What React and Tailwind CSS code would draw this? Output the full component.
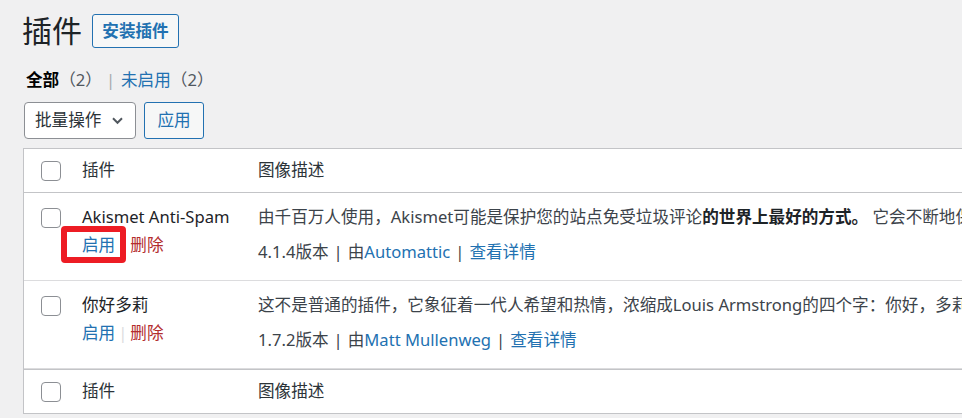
const font = { fontFamily: '"Segoe UI", "Noto Sans", "Noto Sans CJK SC", sans-serif' }

function Checkbox() {
  return <span className="block h-5 w-5 rounded-[4px] border border-[#8c8f94] bg-white" />
}

function HeadRow({ bottom }) {
  return (
    <div className={`flex h-[44px] items-center ${bottom ? 'border-t' : 'border-b'} border-[#c3c4c7] text-[#2c3338]`}>
      <div className="w-[58px] pl-[17px]">
        <Checkbox />
      </div>
      <div className="w-[176px]">插件</div>
      <div className="flex-1">图像描述</div>
    </div>
  )
}

function PluginRow({ name, desc, version, author, highlight, sep }) {
  return (
    <div className="relative flex h-[88px] border-b border-[#dcdcde] bg-white">
      <div className="w-[58px] pl-[17px] pt-[15px]">
        <Checkbox />
      </div>
      <div className="w-[176px] pt-[12px]">
        <div className="leading-6 text-[#1d2327]">{name}</div>
        <div className="mt-1 flex items-center leading-6">
          <span className="text-[#2271b1]">启用</span>
          <span className={`mx-[3px] ${sep ? 'text-[#dcdcde]' : 'text-transparent'}`}>|</span>
          <span className="text-[#b32d2e]">删除</span>
        </div>
      </div>
      <div className="flex-1 pt-[12px] text-[#3c434a]">
        <div className="whitespace-nowrap leading-6">{desc}</div>
        <div className="mt-[11px] whitespace-nowrap leading-6">
          {version}版本<span className="mx-[5px]">|</span>由<span className="text-[#2271b1]">{author}</span>
          <span className="mx-[5px]">|</span>
          <span className="text-[#2271b1]">查看详情</span>
        </div>
      </div>
      {highlight && (
        <span className="absolute left-[37px] top-[33px] h-[37px] w-[65px] rounded-[4px] border-[6px] border-[#ed1c24]" />
      )}
    </div>
  )
}

export default function App() {
  return (
    <div className="h-[418px] w-[962px] overflow-hidden bg-[#f0f0f1] text-[16.6px]" style={font}>
      <div className="flex items-center pl-[22px] pt-[14px]">
        <h1 className="text-[30px] leading-[34px] text-[#1d2327]">插件</h1>
        <button className="ml-[10px] h-[34px] w-[87px] rounded-[3px] border border-[#2271b1] bg-[#f6f7f7] text-[16.6px] font-semibold text-[#2271b1]">
          安装插件
        </button>
      </div>
      <div className="mt-[22px] flex items-center pl-[26px] leading-5">
        <span className="font-bold text-black">全部</span>
        <span className="text-[#50575e]">（2）</span>
        <span className="ml-[4px] text-[#a7aaad]">|</span>
        <span className="ml-[6px] text-[#2271b1]">未启用</span>
        <span className="text-[#50575e]">（2）</span>
      </div>
      <div className="mt-[12px] flex pl-[24px]">
        <div className="flex h-[37px] w-[112px] items-center justify-between rounded-[4px] border border-[#8c8f94] bg-white pl-[10px] pr-[10px] text-[#2c3338]">
          <span>批量操作</span>
          <svg width="15" height="15" viewBox="0 0 20 20" fill="none" stroke="#50575e" strokeWidth="2.6">
            <path d="M4 7l6 6 6-6" />
          </svg>
        </div>
        <button className="ml-[8px] h-[37px] w-[60px] rounded-[3px] border border-[#2271b1] bg-[#f6f7f7] text-[#2271b1]">
          应用
        </button>
      </div>
      <div className="ml-[23px] mt-[9px] w-[1100px] border border-[#c3c4c7] bg-white">
        <HeadRow />
        <PluginRow
          name="Akismet Anti-Spam"
          desc={
            <>
              由千百万人使用，Akismet可能是保护您的站点免受垃圾评论<b className="text-[#1d2327]">的世界上最好的方式。</b> 它会不断地保护您的站点
            </>
          }
          version="4.1.4"
          author="Automattic"
          highlight
        />
        <PluginRow
          name="你好多莉"
          desc="这不是普通的插件，它象征着一代人希望和热情，浓缩成Louis Armstrong的四个字：你好，多莉。在启用之后"
          version="1.7.2"
          author="Matt Mullenweg"
          sep
        />
        <HeadRow bottom />
      </div>
    </div>
  )
}
